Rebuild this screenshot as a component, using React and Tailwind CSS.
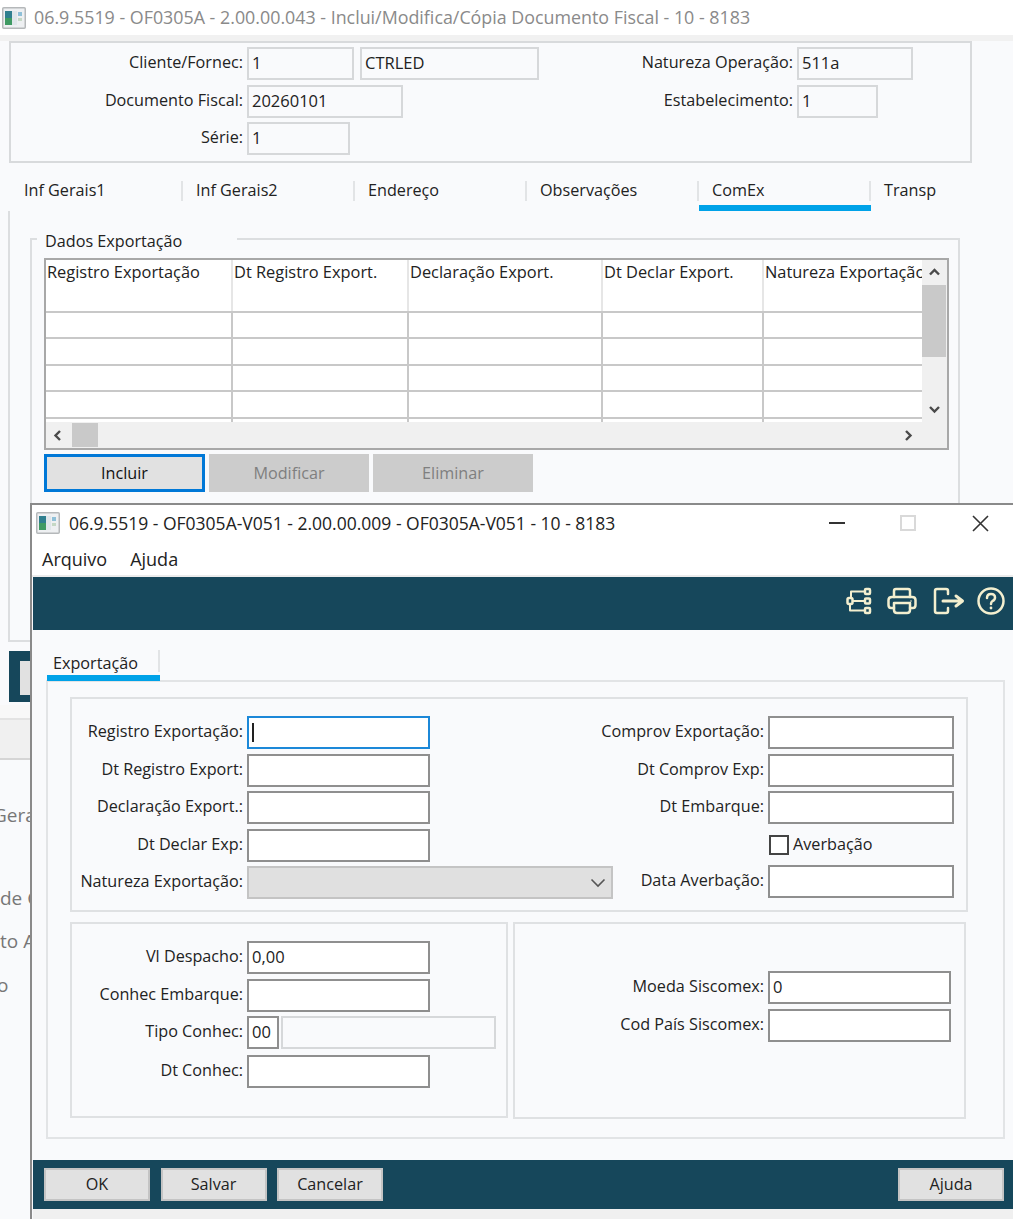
import React from 'react'

const FONT = "font-['Open_Sans','Noto_Sans',sans-serif]"

function AppIcon({ className }) {
  return (
    <svg className={className} width="24" height="22" viewBox="0 0 24 22">
      <rect x="0.75" y="0.75" width="22.5" height="20.5" rx="1" fill="#eef0f2" stroke="#b5b8ba" strokeWidth="1.5" />
      <rect x="3" y="4" width="7" height="14" fill="#2f7f8f" />
      <rect x="3" y="11" width="7" height="7" fill="#3f9a63" />
      <rect x="10" y="4" width="5" height="14" fill="#dfe6ea" />
      <rect x="16" y="5" width="4" height="4" fill="#8fc0d8" />
      <rect x="16" y="11" width="4" height="3" fill="#c5d8c5" />
    </svg>
  )
}

function Arrow({ dir, className }) {
  const d = {
    up: 'M2 8.5 L6.5 4 L11 8.5',
    down: 'M2 4 L6.5 8.5 L11 4',
    left: 'M8 2 L3.5 6.5 L8 11',
    right: 'M4 2 L8.5 6.5 L4 11',
  }[dir]
  return (
    <svg className={className} width="13" height="13" viewBox="0 0 13 13">
      <path d={d} fill="none" stroke="#4a4a4a" strokeWidth="2.4" />
    </svg>
  )
}

function ToolIcons() {
  const s = { fill: 'none', stroke: '#f3efcf', strokeWidth: 2.5, strokeLinejoin: 'round', strokeLinecap: 'round' }
  return (
    <div className="flex items-center mr-[8px]">
      <svg width="26" height="28" viewBox="0 0 26 28" className="mr-[15px]">
        <rect x="1.5" y="11" width="5" height="6" rx="1.5" {...s} />
        <rect x="19" y="2" width="5" height="5" rx="1" {...s} />
        <rect x="19" y="11.5" width="5" height="5" rx="1" {...s} />
        <rect x="19" y="21" width="5" height="5" rx="1" {...s} />
        <path d="M7 14 H19 M19 4.5 H5 V11 M4 17 V23.5 H19" {...s} strokeWidth="2" />
      </svg>
      <svg width="30" height="28" viewBox="0 0 30 28" className="mr-[16px]">
        <path d="M7 10 V4 Q7 2 9 2 H21 Q23 2 23 4 V10" {...s} />
        <path d="M7 21 H4 Q1.5 21 1.5 18 V13 Q1.5 10 5 10 H25 Q28.5 10 28.5 13 V18 Q28.5 21 26 21 H23" {...s} />
        <path d="M7 16 H23 V23 Q23 26 20 26 H10 Q7 26 7 23 Z" {...s} />
        <circle cx="24" cy="14" r="0.8" fill="#f3efcf" />
      </svg>
      <svg width="32" height="28" viewBox="0 0 32 28" className="mr-[12px]">
        <path d="M15 7 V4 Q15 2 13 2 H4 Q2 2 2 4 V24 Q2 26 4 26 H13 Q15 26 15 24 V21" {...s} />
        <path d="M10 14 H28 M23 9 L29.5 14 L23 19" {...s} strokeWidth="3" />
      </svg>
      <svg width="28" height="28" viewBox="0 0 28 28">
        <circle cx="14" cy="14" r="12.5" {...s} />
        <path d="M10 11 Q10 7 14 7 Q18 7 18 10.5 Q18 13 15.5 14 Q14 15 14 17" {...s} />
        <circle cx="14" cy="21" r="1.4" fill="#f3efcf" />
      </svg>
    </div>
  )
}

function Input({ w, value, tone = 'dark', focus, className = '' }) {
  let border = 'border-[#8f8f8f] bg-white'
  if (tone === 'light') border = 'border-[#d6d8da] bg-[#f9fafc]'
  if (focus) border = 'border-[#1c88d8] bg-white'
  return (
    <div className={`${w} h-[33px] shrink-0 border-2 ${border} flex items-center pl-[3px] text-[16.5px] text-[#222] ${className}`}>
      {focus ? <div className="w-[2px] h-[19px] bg-[#222]" /> : value}
    </div>
  )
}

function Label({ w, children }) {
  return (
    <div className={`${w} shrink-0 pr-[4px] pb-[2px] text-right text-[16.2px] text-[#222] whitespace-nowrap`}>{children}</div>
  )
}

function Row({ label, labelW, children }) {
  return (
    <div className="flex items-center">
      <Label w={labelW}>{label}</Label>
      {children}
    </div>
  )
}

function WinButton({ children, w = 'w-[106px]' }) {
  return (
    <div className={`${w} h-[33px] flex items-center justify-center bg-[#e1e1e1] border-2 border-[#c4c4c4] text-[16.2px] text-[#222]`}>{children}</div>
  )
}

function Background() {
  const tabs = ['Inf Gerais1', 'Inf Gerais2', 'Endereço', 'Observações', 'ComEx']
  const cols = [
    ['w-[187px]', 'Registro Exportação'],
    ['w-[176px]', 'Dt Registro Export.'],
    ['w-[194px]', 'Declaração Export.'],
    ['w-[161px]', 'Dt Declar Export.'],
    ['flex-1', 'Natureza Exportação'],
  ]
  return (
    <div className="h-[1219px] overflow-hidden">
      <div className="h-[35px] bg-white flex items-center pl-[2px] text-[#8a8a8a] text-[17.85px] whitespace-nowrap">
        <AppIcon className="mr-[8px]" />
        06.9.5519 - OF0305A - 2.00.00.043 - Inclui/Modifica/Cópia Documento Fiscal - 10 - 8183
      </div>
      <div className="h-[6px] bg-[#f1f1f1]" />
      <div className="ml-[9px] w-[963px] h-[122px] border-2 border-[#d8dadc] flex pt-[4px]">
        <div className="w-[620px] flex flex-col gap-[4.5px]">
          <Row label="Cliente/Fornec:" labelW="w-[236px]">
            <Input w="w-[107px]" value="1" tone="light" />
            <Input w="w-[179px]" value="CTRLED" tone="light" className="ml-[6px]" />
          </Row>
          <Row label="Documento Fiscal:" labelW="w-[236px]">
            <Input w="w-[156px]" value="20260101" tone="light" />
          </Row>
          <Row label="Série:" labelW="w-[236px]">
            <Input w="w-[103px]" value="1" tone="light" />
          </Row>
        </div>
        <div className="flex flex-col gap-[4.5px]">
          <Row label="Natureza Operação:" labelW="w-[166px]">
            <Input w="w-[116px]" value="511a" tone="light" />
          </Row>
          <Row label="Estabelecimento:" labelW="w-[166px]">
            <Input w="w-[81px]" value="1" tone="light" />
          </Row>
        </div>
      </div>

      <div className="mt-[17px] ml-[11px] flex h-[31px] text-[16.2px] text-[#222]">
        {tabs.map((t, i) => (
          <div key={t} className={`w-[172px] h-[31px] pl-[13px] flex items-center relative ${i === 4 ? 'border-b-[6px] border-[#00a2e8] pb-[5px]' : 'pb-[11px]'}`}>
            {t}
            <div className="absolute right-0 top-[1px] w-[2px] h-[20px] bg-[#e2e4e6]" />
          </div>
        ))}
        <div className="pl-[13px] pb-[11px] flex items-center">Transp</div>
      </div>

      <div className="ml-[8px] w-[22px] h-[431px] border-l-2 border-b-2 border-[#dcdee0]" />

      <div className="flex mt-[9px] ml-[9px]">
        <div className="w-[21px] h-[51px] bg-[#16475b] pl-[11px] pt-[10px]">
          <div className="h-[34px] bg-[#e1e1e1]" />
        </div>
      </div>
      <div className="mt-[3px] h-[15px] w-[30px] bg-[#f8f8f8] border-b-2 border-[#e3e3e3]" />
      <div className="h-[40px] w-[30px] bg-[#f0f0f0] border-b-2 border-[#d5d5d5]" />
      <div className="w-[30px] overflow-hidden text-[19px] text-[#777] whitespace-nowrap">
        <div className="mt-[41px] h-[28px] leading-[28px] -ml-[7px]">Gera</div>
        <div className="mt-[55px] h-[28px] leading-[28px]">de C</div>
        <div className="mt-[15px] h-[28px] leading-[28px]">to A</div>
        <div className="mt-[16px] h-[28px] leading-[28px] -ml-[3px]">o</div>
      </div>

      {/* grupo Dados Exportação fica por cima da aba */}
      <div className="absolute left-[30px] top-[238px] w-[930px] h-[266px] border-2 border-[#dcdee0] border-b-0">
        <div className="absolute left-[5px] -top-[9px] px-[8px] bg-[#f9fafc] w-[200px] h-[20px] flex items-center text-[16.2px] text-[#222] whitespace-nowrap">
          Dados Exportação
        </div>
        <div className="absolute left-[12px] top-[18px] w-[905px] h-[192px] border-2 border-[#a8a8a8] bg-[#f0f0f0]">
          <div className="flex h-[162px]">
            <div className="w-[876px] bg-white overflow-hidden">
              <div className="flex h-[51px]">
                {cols.map(([w, t], i) => (
                  <div key={t} className={`${w} h-[51px] pl-[1px] text-[16.4px] text-[#222] whitespace-nowrap overflow-hidden ${i < 4 ? 'border-r-2 border-[#e6e6e6]' : ''}`}>{t}</div>
                ))}
              </div>
              {[0, 1, 2, 3, 4].map((r) => (
                <div key={r} className="flex h-[26.4px] border-t-2 border-[#c8c8c8]">
                  {cols.map(([w, t], i) => (
                    <div key={t} className={`${w} ${i < 4 ? 'border-r-2 border-[#c8c8c8]' : ''}`} />
                  ))}
                </div>
              ))}
            </div>
            <div className="w-[24px] flex flex-col items-center">
              <div className="h-[25px] flex items-center justify-center"><Arrow dir="up" /></div>
              <div className="w-full h-[72px] bg-[#c9c9c9]" />
              <div className="flex-1 flex items-end justify-center pb-[6px]"><Arrow dir="down" /></div>
            </div>
          </div>
          <div className="flex items-center h-[26px]">
            <Arrow dir="left" className="ml-[6px]" />
            <div className="ml-[7px] w-[26px] h-[24px] bg-[#c9c9c9]" />
            <div className="flex-1" />
            <Arrow dir="right" className="mr-[32px]" />
          </div>
        </div>
        <div className="absolute left-[12px] top-[214px] flex gap-[4px] text-[16.2px]">
          <div className="w-[161px] h-[38px] flex items-center justify-center bg-[#e1e1e1] border-[3px] border-[#0078d7] text-[#111]">Incluir</div>
          <div className="w-[160px] h-[38px] flex items-center justify-center bg-[#cccccc] text-[#7f7f7f]">Modificar</div>
          <div className="w-[160px] h-[38px] flex items-center justify-center bg-[#cccccc] text-[#7f7f7f]">Eliminar</div>
        </div>
      </div>
    </div>
  )
}

function ExportWindow() {
  return (
    <div className="absolute left-[30px] top-[503px] w-[983px] h-[716px] border-t-2 border-l-2 border-[#8a8a8a] bg-[#f9fafc] flex flex-col">
      <div className="h-[36px] bg-white flex items-center pl-[4px] text-[17.5px] text-[#222] whitespace-nowrap shrink-0">
        <AppIcon className="mr-[9px]" />
        <span className="flex-1">06.9.5519 - OF0305A-V051 - 2.00.00.009 - OF0305A-V051 - 10 - 8183</span>
        <svg width="16" height="16" viewBox="0 0 16 16" className="mr-[55px]"><path d="M0 8 H16" stroke="#333" strokeWidth="2" /></svg>
        <svg width="16" height="16" viewBox="0 0 16 16" className="mr-[56px]"><rect x="1" y="1" width="14" height="14" fill="none" stroke="#d9d9d9" strokeWidth="2" /></svg>
        <svg width="17" height="17" viewBox="0 0 17 17" className="mr-[24px]"><path d="M1 1 L16 16 M16 1 L1 16" stroke="#333" strokeWidth="1.6" /></svg>
      </div>
      <div className="h-[36px] bg-white flex items-center pl-[10px] pt-[2px] gap-[23px] text-[18px] text-[#222] shrink-0 border-b-2 border-[#ececec]">
        <span>Arquivo</span>
        <span>Ajuda</span>
      </div>
      <div className="h-[53px] ml-[1px] bg-[#16475b] flex items-center justify-end shrink-0 pb-[6px]">
        <ToolIcons />
      </div>

      <div className="ml-[15px] mt-[18px] w-[113px] h-[33px] shrink-0 relative z-10">
        <div className="h-[27px] pl-[6px] pt-[3px] flex items-center text-[16.2px] text-[#222]">Exportação</div>
        <div className="absolute right-0 top-[2px] w-[2px] h-[22px] bg-[#e2e4e6]" />
        <div className="h-[6px] bg-[#00a2e8]" />
      </div>

      <div className="-mt-[1px] ml-[14px] w-[959px] h-[459px] shrink-0 border-2 border-[#e2e4e6] pt-[15px] pl-[22px]">
        <div className="w-[898px] h-[215px] border-2 border-[#dfe1e3] flex pt-[17px]">
          <div className="w-[521px] flex flex-col gap-[4.5px]">
            <Row label="Registro Exportação:" labelW="w-[175px]"><Input w="w-[183px]" focus /></Row>
            <Row label="Dt Registro Export:" labelW="w-[175px]"><Input w="w-[183px]" /></Row>
            <Row label="Declaração Export.:" labelW="w-[175px]"><Input w="w-[183px]" /></Row>
            <Row label="Dt Declar Exp:" labelW="w-[175px]"><Input w="w-[183px]" /></Row>
            <Row label="Natureza Exportação:" labelW="w-[175px]">
              <div className="w-[366px] h-[33px] shrink-0 border-2 border-[#c4c4c4] bg-[#e0e0e0] flex items-center justify-end pr-[5px]">
                <svg width="16" height="10" viewBox="0 0 16 10"><path d="M1.5 1.5 L8 8 L14.5 1.5" fill="none" stroke="#555" strokeWidth="1.6" /></svg>
              </div>
            </Row>
          </div>
          <div className="flex flex-col gap-[4.5px]">
            <Row label="Comprov Exportação:" labelW="w-[175px]"><Input w="w-[186px]" /></Row>
            <Row label="Dt Comprov Exp:" labelW="w-[175px]"><Input w="w-[186px]" /></Row>
            <Row label="Dt Embarque:" labelW="w-[175px]"><Input w="w-[186px]" /></Row>
            <div className="flex items-center h-[32px] pl-[176px]">
              <div className="w-[20px] h-[20px] border-2 border-[#444] bg-white" />
              <span className="ml-[4px] text-[16.2px] text-[#222]">Averbação</span>
            </div>
            <Row label="Data Averbação:" labelW="w-[175px]"><Input w="w-[186px]" /></Row>
          </div>
        </div>

        <div className="flex mt-[10px] gap-[5px]">
          <div className="w-[438px] h-[196px] border-2 border-[#dfe1e3] pt-[17px] flex flex-col gap-[4.5px]">
            <Row label="Vl Despacho:" labelW="w-[175px]"><Input w="w-[183px]" value="0,00" /></Row>
            <Row label="Conhec Embarque:" labelW="w-[175px]"><Input w="w-[183px]" /></Row>
            <Row label="Tipo Conhec:" labelW="w-[175px]">
              <Input w="w-[32px]" value="00" />
              <Input w="w-[215px]" tone="light" className="ml-[2px]" />
            </Row>
            <div className="mt-[1px]">
              <Row label="Dt Conhec:" labelW="w-[175px]"><Input w="w-[183px]" /></Row>
            </div>
          </div>
          <div className="w-[453px] h-[197px] border-2 border-[#dfe1e3] pt-[47px] flex flex-col gap-[4.5px]">
            <Row label="Moeda Siscomex:" labelW="w-[253px]"><Input w="w-[183px]" value="0" /></Row>
            <Row label="Cod País Siscomex:" labelW="w-[253px]"><Input w="w-[183px]" /></Row>
          </div>
        </div>
      </div>

      <div className="mt-[21px] ml-[1px] h-[49px] shrink-0 bg-[#16475b] flex items-center pl-[11px] pr-[9px] gap-[10.5px]">
        <WinButton>OK</WinButton>
        <WinButton>Salvar</WinButton>
        <WinButton>Cancelar</WinButton>
        <div className="flex-1" />
        <WinButton>Ajuda</WinButton>
      </div>
      <div className="flex-1 ml-[1px] bg-[#f0f0f0]" />
    </div>
  )
}

export default function App() {
  return (
    <div className={`relative w-[1013px] h-[1219px] overflow-hidden bg-[#f9fafc] ${FONT}`}>
      <Background />
      <ExportWindow />
    </div>
  )
}
